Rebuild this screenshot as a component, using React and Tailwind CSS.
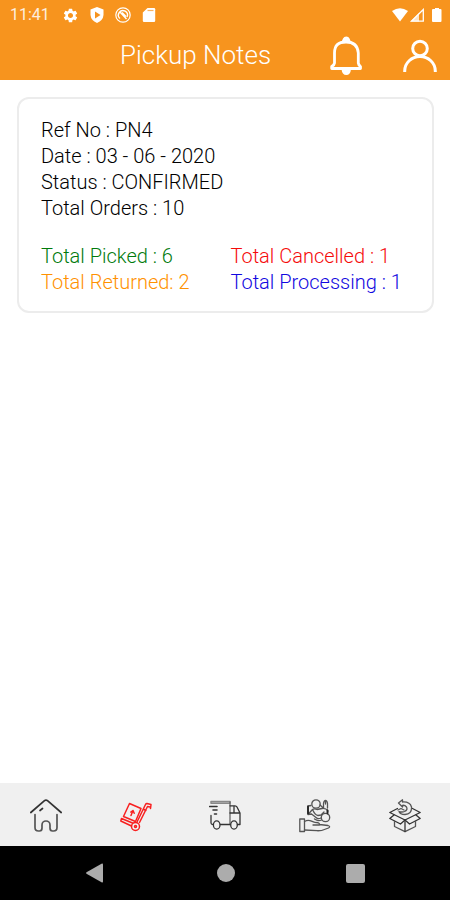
import { MdSettings } from "react-icons/md";

const HomeIcon = () => (
  <svg viewBox="0 0 32 34" className="w-8 h-[34px]" fill="none" stroke="#333" strokeWidth="1.7" strokeLinecap="round" strokeLinejoin="round">
    <path d="M.8 13.5 14.5 1.7q1.5-1.2 3 0L31.2 13.5" />
    <path d="M10 11.5 12.5 9.5" />
    <path d="M5 15.500v13q0 3.500 3.500 3.500h1q2.500 0 2.500-3v-3a4 4 0 0 1 8 0v3q0 3 2.500 3h1q3.500 0 3.500-3.500v-13" stroke="#555" />
  </svg>
);

const TrolleyIcon = () => (
  <svg viewBox="0 0 32 34" className="w-8 h-[34px]" fill="none" stroke="#f82020" strokeWidth="1.5" strokeLinecap="round" strokeLinejoin="round">
    <path d="M9.500 4.500 21 9.500 15.500 22.500 3.500 17.500Z" />
    <path d="M11 16.500 13 11.500M10.800 13 13 11.500 14.200 14.300" />
    <path d="M17 23 25.500 5.500Q26 4.500 27 4.600L31 5.500 30.500 9.500M19.500 23.500 27.500 7.500 30 8M24 10.500 26 11.500" />
    <path d="M1.500 19.500 12.500 24M.8 22 11.500 27M1.500 19.500.8 22" />
    <circle cx="15.500" cy="27.500" r="4" />
    <circle cx="15.500" cy="27.500" r="1" />
  </svg>
);

const TruckIcon = () => (
  <svg viewBox="0 0 32 34" className="w-8 h-[34px]" fill="none" stroke="#333" strokeWidth="1.300" strokeLinecap="round" strokeLinejoin="round">
    <path d="M2 4.300V2.500H21V4.300H2" stroke="#888" strokeWidth="1.500" />
    <path d="M21 3V25.500" stroke="#666" />
    <path d="M.7 7.500H8M4 11H8M5.500 15H7.500" strokeWidth="1.600" />
    <path d="M2 16.500V24q0 1.500 2 1.500M11.500 25.500H21M28.500 25.500H31V14L28 8q-.6-1.200-2-1.200H21M21 14H31M25 7V14" />
    <ellipse cx="7.700" cy="26" rx="3.300" ry="4.200" />
    <ellipse cx="25" cy="26" rx="3.300" ry="4.200" />
  </svg>
);

const HandIcon = () => (
  <svg viewBox="0 0 32 34" className="w-8 h-[34px]" fill="none" stroke="#555" strokeWidth="1.300" strokeLinecap="round" strokeLinejoin="round">
    <path d="M.8 20H5.500V32.500H.8Z" />
    <path d="M5.500 22.500Q9 20.500 12.500 22.200T18 23.500Q21 24 20.500 26H14M20.500 25.500 29 26.500Q32 27.500 29.500 29Q23 32 18 31.700L5.500 31" />
    <circle cx="17" cy="5" r="4.200" />
    <circle cx="26.500" cy="18.500" r="4.200" />
    <path d="M24.500 9V4.500Q25 1.500 26.500 1.500T28.500 4.500V9M26.500 2V5M28.500 11V15" />
    <path d="M12 6.500 9 7V15.500L12.500 15M9 15.500 13 11Q15 9 18 10.500L23 9.500Q27 9 29 12M14 11.500Q16 16 19 16.500L22 16 25 13M12.500 15 17 18.500Q19 20.500 22 19M21 6 25 9.500" />
    <path d="M9 7.500V14.500M28.500 11.500V14" stroke="#222" strokeWidth="1.800" />
    <path d="M15.500 20Q19 22.500 22.500 21" />
  </svg>
);

const BoxIcon = () => (
  <svg viewBox="0 0 32 34" className="w-8 h-[34px]" fill="none" stroke="#333" strokeWidth="1.300" strokeLinecap="round" strokeLinejoin="round">
    <path d="M8.500 9.500.8 13.500 16 21 31.200 13.500 23.500 9.500" />
    <path d="M5 16 .8 19.500 11.500 25 16 21 20.500 25 31.200 19.500 27 16" />
    <path d="M5.500 22V27.500L16 32.700 26.500 27.500V22" stroke="#555" />
    <path d="M16 21V32.500" />
    <path d="M9.500 4 13.500.8V3Q21 2.500 22.500 8Q23 15 16 15.500Q11 15.500 10 12.500Q13 13.500 15.500 12.500Q19 11 17.500 8Q16 6 13.500 6.300V8Z" stroke="#555" />
    <path d="M9 11 12 9.500 15 11" stroke="#555" />
  </svg>
);

const BellIcon = () => (
  <svg viewBox="0 0 32 40" className="w-8 h-10" fill="none" stroke="white" strokeWidth="2.800" strokeLinejoin="round">
    <path d="M4.500 27V17Q4.500 6 16 6T28.300 17V27Q28.500 29 30.500 30.500V32.500H1.700V30.500Q4.300 29 4.500 27Z" />
    <path d="M9.500 6.500Q13 4.500 13 2.500Q14 .6 16.300.6T19.500 2.500Q19.500 4.500 23 6.500Z" fill="white" stroke="none" />
    <path d="M11.500 33H21Q20.500 39 16.300 39T11.500 33Z" fill="white" stroke="none" />
  </svg>
);

const UserIcon = () => (
  <svg viewBox="0 0 34 34" className="w-[34px] h-[34px]" fill="none" stroke="white" strokeWidth="3">
    <circle cx="17" cy="9.500" r="7.300" />
    <path d="M1.700 33V32A15.300 14.500 0 0 1 32.300 32V33" />
  </svg>
);

const tabs = [
  { name: "Home", Icon: HomeIcon },
  { name: "Pickup notes", Icon: TrolleyIcon },
  { name: "Deliveries", Icon: TruckIcon },
  { name: "Handover", Icon: HandIcon },
  { name: "Returns", Icon: BoxIcon },
];

function StatusBar() {
  return (
    <div className="h-[30px] pl-[10px] pr-2 flex items-center text-white">
      <span className="w-[52px] text-base leading-none opacity-85">11:41</span>
      <div className="flex items-center gap-[10px]">
        <MdSettings className="w-[17px] h-[17px]" />
        <svg viewBox="0 0 16 16" className="w-4 h-4">
          <path d="M8 0 14.500 2.500V8Q14 13.500 8 16Q2 13.500 1.500 8V2.500Z" fill="white" />
          <path d="M6 4.500 11.500 8 6 11.500Z" fill="#f7941e" />
        </svg>
        <svg viewBox="0 0 16 16" className="w-4 h-4" fill="none" stroke="white">
          <circle cx="8" cy="8" r="7.200" strokeWidth="1.200" />
          <path d="M12 10A4.500 4.500 0 1 0 5 11.500M4.500 4.500 11.500 12M7 5.500 11 9.500" strokeWidth="1.400" />
        </svg>
        <svg viewBox="0 0 16 16" className="w-4 h-4">
          <path d="M6.500 1H13Q14.200 1 14.200 2.200V13.800Q14.200 15 13 15H3Q1.800 15 1.800 13.800V5.500Z" fill="white" />
          <path d="M6.500 3.500H12.500" stroke="#f7941e" strokeWidth="1.200" opacity=".7" />
        </svg>
      </div>
      <svg viewBox="0 0 50 14" className="w-[50px] h-[14px] ml-auto">
        <path d="M0 3Q8-2.500 16 3L8 13.500Z" fill="white" />
        <path d="M19.500 13.200H31.300V1.500Z" fill="none" stroke="white" strokeWidth="1.300" />
        <path d="M18.500 13.500 27 5V13.500Z" fill="white" opacity=".75" />
        <path d="M42 1H43V0H47V1H48.500Q49.500 1 49.500 2V13Q49.500 14 48.500 14H41Q40 14 40 13V2Q40 1 41 1Z" fill="white" />
      </svg>
    </div>
  );
}

function App() {
  return (
    <div className="min-h-screen flex flex-col bg-white font-[Roboto,sans-serif]">
      <header className="bg-[#f7941e]">
        <StatusBar />
        <div className="flex items-center pl-[120px] pr-[13px] h-[50px]">
          <h1 className="text-[26px] leading-8 text-white font-light">Pickup Notes</h1>
          <div className="ml-auto flex items-center gap-[41px] pt-[2px]">
            <button type="button" aria-label="Notifications">
              <BellIcon />
            </button>
            <button type="button" aria-label="Profile">
              <UserIcon />
            </button>
          </div>
        </div>
      </header>

      <main className="flex-1 px-4 pt-[17px]">
        <section className="rounded-xl border-2 border-[#ececec] px-[22px] pt-[18px] pb-4 ml-px text-xl leading-[26px] font-light text-black">
          <p>Ref No : PN4</p>
          <p>Date : 03 - 06 - 2020</p>
          <p>Status : CONFIRMED</p>
          <p>Total Orders : 10</p>
          <div className="grid grid-cols-2 gap-x-[10px] mt-[22px] whitespace-nowrap">
            <p className="text-[#007a0c]">Total Picked : 6</p>
            <p className="text-[#f50a0a]">Total Cancelled : 1</p>
            <p className="text-[#ff9100]">Total Returned: 2</p>
            <p className="text-[#1208e0]">Total Processing : 1</p>
          </div>
        </section>
      </main>

      <nav className="grid grid-cols-5 h-[63px] bg-[#f0f0f0] pt-[2px] pl-px">
        {tabs.map(({ name, Icon }) => (
          <button key={name} type="button" aria-label={name} className="flex items-center justify-center">
            <Icon />
          </button>
        ))}
      </nav>

      <div className="h-[54px] bg-black px-[85px] flex items-center justify-between">
        <button type="button" aria-label="Back">
          <svg viewBox="0 0 20 20" className="w-5 h-5" fill="#acacac">
            <path d="M1.500 9.200 16.500.8Q18 .2 18 1.500V18.500Q18 19.800 16.500 19.200L1.500 10.800Q.5 10 1.500 9.200Z" />
          </svg>
        </button>
        <button type="button" aria-label="Home screen">
          <div className="w-[18px] h-[18px] rounded-full bg-[#acacac]" />
        </button>
        <button type="button" aria-label="Recent apps">
          <div className="w-[19px] h-[19px] rounded-xs bg-[#acacac]" />
        </button>
      </div>
    </div>
  );
}

export default App;
